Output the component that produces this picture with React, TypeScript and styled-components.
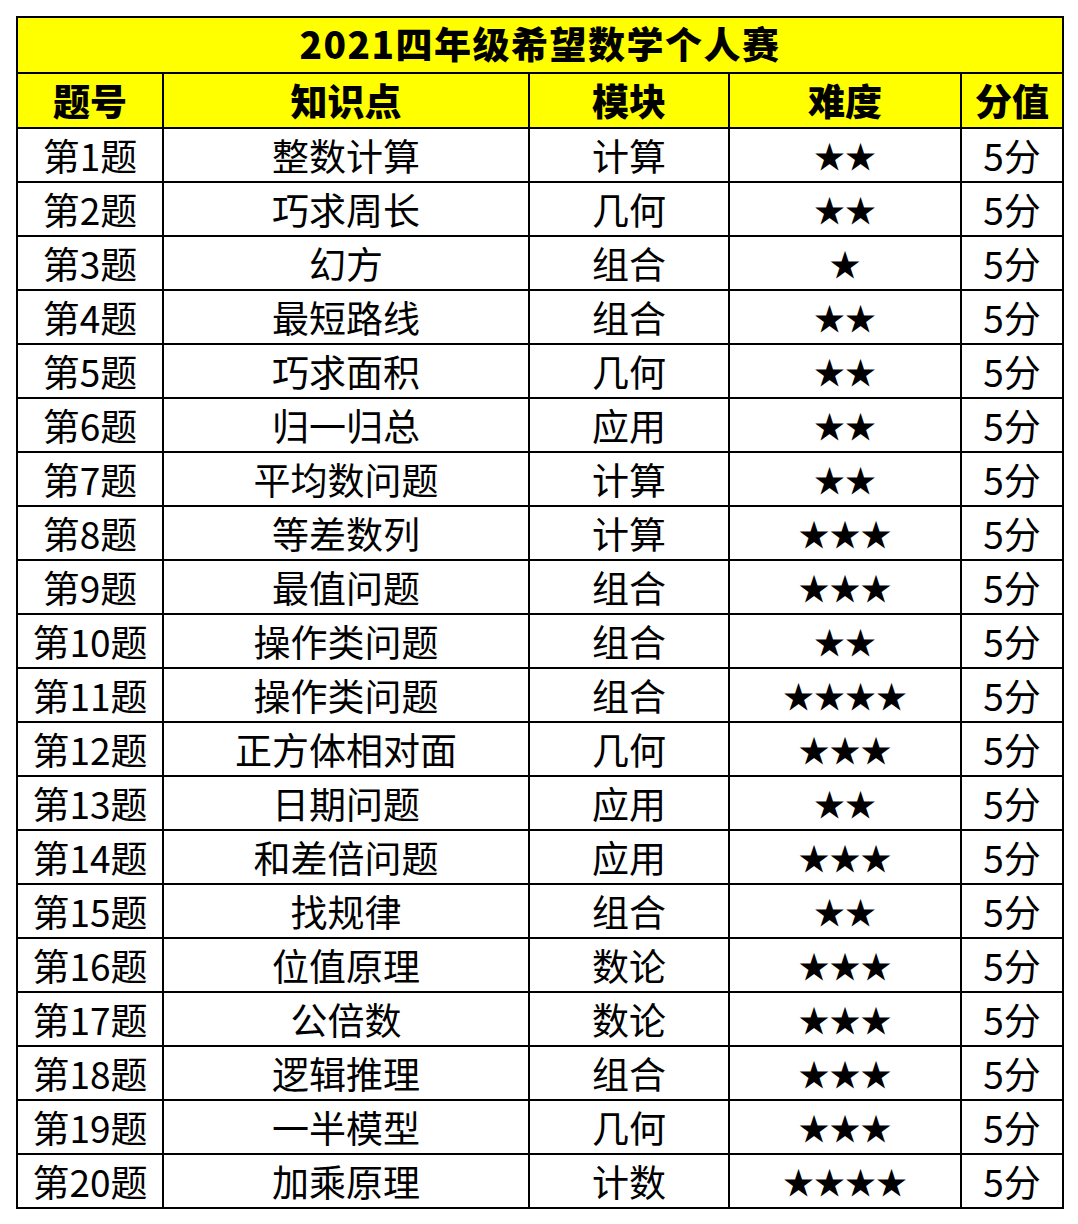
import React from "react";
import styled, { createGlobalStyle } from "styled-components";

type Row = {
  no: number;
  topic: string;
  module: string;
  stars: number;
};

const rows: Row[] = [
  { no: 1, topic: "整数计算", module: "计算", stars: 2 },
  { no: 2, topic: "巧求周长", module: "几何", stars: 2 },
  { no: 3, topic: "幻方", module: "组合", stars: 1 },
  { no: 4, topic: "最短路线", module: "组合", stars: 2 },
  { no: 5, topic: "巧求面积", module: "几何", stars: 2 },
  { no: 6, topic: "归一归总", module: "应用", stars: 2 },
  { no: 7, topic: "平均数问题", module: "计算", stars: 2 },
  { no: 8, topic: "等差数列", module: "计算", stars: 3 },
  { no: 9, topic: "最值问题", module: "组合", stars: 3 },
  { no: 10, topic: "操作类问题", module: "组合", stars: 2 },
  { no: 11, topic: "操作类问题", module: "组合", stars: 4 },
  { no: 12, topic: "正方体相对面", module: "几何", stars: 3 },
  { no: 13, topic: "日期问题", module: "应用", stars: 2 },
  { no: 14, topic: "和差倍问题", module: "应用", stars: 3 },
  { no: 15, topic: "找规律", module: "组合", stars: 2 },
  { no: 16, topic: "位值原理", module: "数论", stars: 3 },
  { no: 17, topic: "公倍数", module: "数论", stars: 3 },
  { no: 18, topic: "逻辑推理", module: "组合", stars: 3 },
  { no: 19, topic: "一半模型", module: "几何", stars: 3 },
  { no: 20, topic: "加乘原理", module: "计数", stars: 4 },
];

const colWidths = [146, 366, 200, 232, 102];

export default function App() {
  return (
    <>
      <GlobalStyle />
      <Page>
        <Table>
          <colgroup>
            {colWidths.map((w, i) => (
              <col key={i} style={{ width: w }} />
            ))}
          </colgroup>
          <thead>
            <TitleRow>
              <TitleCell colSpan={5}>2021四年级希望数学个人赛</TitleCell>
            </TitleRow>
            <HeadRow>
              <HeadCell>题号</HeadCell>
              <HeadCell>知识点</HeadCell>
              <HeadCell>模块</HeadCell>
              <HeadCell>难度</HeadCell>
              <HeadCell>分值</HeadCell>
            </HeadRow>
          </thead>
          <tbody>
            {rows.map((r) => (
              <DataRow key={r.no}>
                <Cell>第{r.no}题</Cell>
                <Cell>{r.topic}</Cell>
                <Cell>{r.module}</Cell>
                <Cell>
                  <Stars>{"★".repeat(r.stars)}</Stars>
                </Cell>
                <Cell>5分</Cell>
              </DataRow>
            ))}
          </tbody>
        </Table>
      </Page>
    </>
  );
}

const GlobalStyle = createGlobalStyle`
  html, body {
    margin: 0;
    padding: 0;
    background: #ffffff;
  }
  body {
    font-family: "Noto Sans CJK SC", "Noto Sans", sans-serif;
    color: #000;
  }
`;

const Page = styled.div`
  padding: 16px;
  width: 1078px;
  box-sizing: border-box;
`;

const Table = styled.table`
  border-collapse: collapse;
  table-layout: fixed;
  width: 1046px;
  border: 2px solid #000;
`;

const TitleRow = styled.tr`
  height: 56px;
  background: #ffff00;
`;

const HeadRow = styled.tr`
  height: 55px;
  background: #ffff00;
`;

const DataRow = styled.tr`
  height: 54px;
  background: #ffffff;
`;

const Cell = styled.td`
  border: 2px solid #000;
  padding: 0;
  text-align: center;
  vertical-align: middle;
  font-size: 37px;
  font-weight: 400;
  line-height: 1;
  white-space: nowrap;
`;

const HeadCell = styled.th`
  border: 2px solid #000;
  padding: 0;
  text-align: center;
  vertical-align: middle;
  font-size: 37px;
  font-weight: 900;
  line-height: 1;
`;

const TitleCell = styled.th`
  border: 2px solid #000;
  padding: 0 0 3px;
  text-align: center;
  vertical-align: middle;
  font-size: 37px;
  font-weight: 900;
  letter-spacing: 1.5px;
  line-height: 1;
`;

const Stars = styled.span`
  display: inline-block;
  font-family: "Noto Sans CJK SC", sans-serif;
  font-size: 31px;
  line-height: 1;
  padding-bottom: 6px;
`;
